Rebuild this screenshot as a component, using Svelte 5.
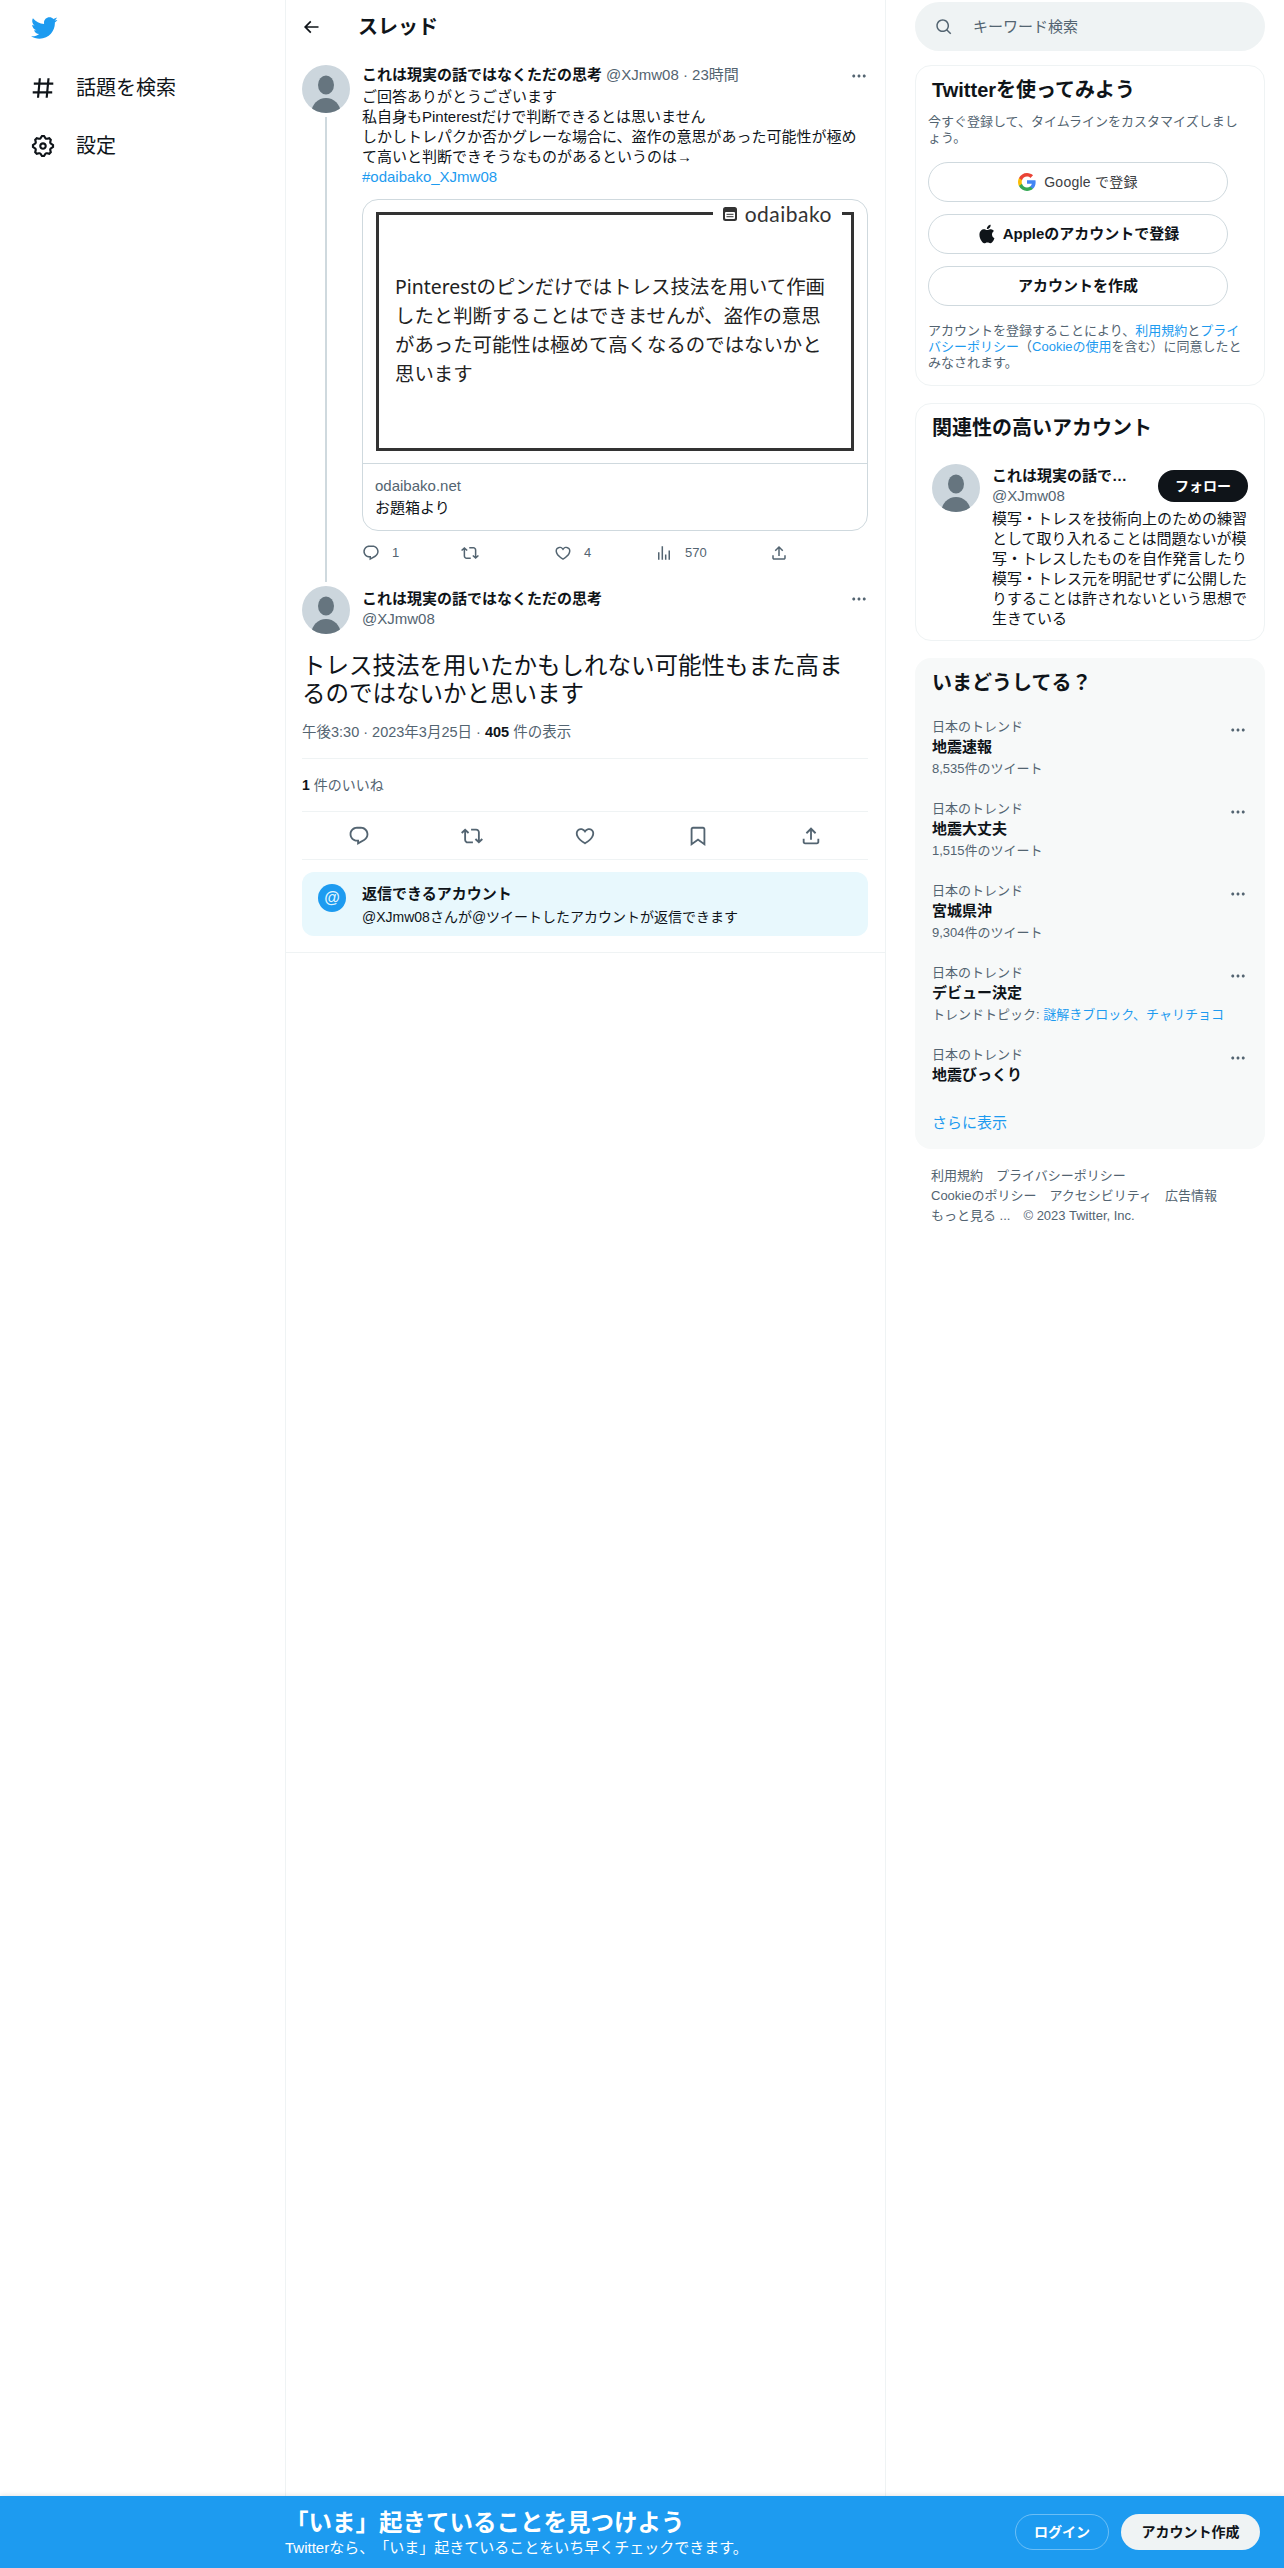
<script>
  const icons = {
    bird: 'M23.643 4.937c-.835.37-1.732.62-2.675.733.962-.576 1.7-1.49 2.048-2.578-.9.534-1.897.922-2.958 1.13-.85-.904-2.06-1.47-3.4-1.47-2.572 0-4.658 2.086-4.658 4.66 0 .364.042.718.12 1.06-3.873-.195-7.304-2.05-9.602-4.868-.4.69-.63 1.49-.63 2.342 0 1.616.823 3.043 2.072 3.878-.764-.025-1.482-.234-2.11-.583v.06c0 2.257 1.605 4.14 3.737 4.568-.392.106-.803.162-1.227.162-.3 0-.593-.028-.877-.082.593 1.85 2.313 3.198 4.352 3.234-1.595 1.25-3.604 1.995-5.786 1.995-.376 0-.747-.022-1.112-.065 2.062 1.323 4.51 2.093 7.14 2.093 8.57 0 13.255-7.098 13.255-13.254 0-.2-.005-.402-.014-.602.91-.658 1.7-1.477 2.323-2.41z',
    hash: 'M10.09 3.098L9.72 7h5.99l.39-4.089 1.99.187L17.72 7h3.78v2h-3.97l-.56 6h3.53v2h-3.72l-.38 4.089-1.99-.187.36-3.902H8.78l-.38 4.089-1.99-.187L6.77 17H2.5v-2h4.46l.56-6H3.5V7h4.21l.39-4.089 1.99.187zM14.96 15l.56-6H9.53l-.56 6h5.99z',
    gear: 'M10.54 1.75h2.92l1.57 2.36c.11.17.32.25.53.21l2.53-.59 2.17 2.17-.58 2.54c-.05.2.04.41.21.53l2.36 1.57v2.92l-2.36 1.57c-.17.12-.26.33-.21.53l.58 2.54-2.17 2.17-2.53-.59c-.21-.04-.42.04-.53.21l-1.57 2.36h-2.92l-1.58-2.36c-.11-.17-.32-.25-.52-.21l-2.54.59-2.17-2.17.58-2.54c.05-.2-.03-.41-.21-.53l-2.35-1.57v-2.92L4.1 8.97c.18-.12.26-.33.21-.53L3.73 5.9 5.9 3.73l2.54.59c.2.04.41-.04.52-.21l1.58-2.36zm1.07 2l-.98 1.47C10.05 6.08 9 6.5 7.99 6.27l-1.46-.34-.6.6.33 1.46c.24 1.01-.18 2.07-1.05 2.64l-1.46.98v.78l1.46.98c.87.57 1.29 1.63 1.05 2.64l-.33 1.46.6.6 1.46-.34c1.01-.23 2.06.19 2.64 1.05l.98 1.47h.78l.97-1.47c.58-.86 1.63-1.28 2.65-1.05l1.45.34.61-.6-.34-1.46c-.23-1.01.18-2.07 1.05-2.64l1.47-.98v-.78l-1.47-.98c-.87-.57-1.28-1.63-1.05-2.64l.34-1.46-.61-.6-1.45.34c-1.02.23-2.07-.19-2.65-1.05l-.97-1.47h-.78zM12 10.5c-.83 0-1.5.67-1.5 1.5s.67 1.5 1.5 1.5c.82 0 1.5-.67 1.5-1.5s-.68-1.5-1.5-1.5zM8.5 12c0-1.93 1.56-3.5 3.5-3.5 1.93 0 3.5 1.57 3.5 3.5s-1.57 3.5-3.5 3.5c-1.94 0-3.5-1.57-3.5-3.5z',
    back: 'M7.414 13l5.043 5.04-1.414 1.42L3.586 12l7.457-7.46 1.414 1.42L7.414 11H21v2H7.414z',
    more: 'M3 12c0-1.1.9-2 2-2s2 .9 2 2-.9 2-2 2-2-.9-2-2zm9 2c1.1 0 2-.9 2-2s-.9-2-2-2-2 .9-2 2 .9 2 2 2zm7 0c1.1 0 2-.9 2-2s-.9-2-2-2-2 .9-2 2 .9 2 2 2z',
    reply: 'M1.751 10c0-4.42 3.584-8 8.005-8h4.366c4.49 0 8.129 3.64 8.129 8.13 0 2.96-1.607 5.68-4.196 7.11l-8.054 4.46v-3.69h-.067c-4.49.1-8.183-3.51-8.183-8.01zm8.005-6c-3.317 0-6.005 2.69-6.005 6 0 3.37 2.77 6.08 6.138 6.01l.351-.01h1.761v2.3l5.087-2.81c1.951-1.08 3.163-3.13 3.163-5.36 0-3.39-2.744-6.13-6.129-6.13H9.756z',
    retweet: 'M4.5 3.88l4.432 4.14-1.364 1.46L5.5 7.55V16c0 1.1.896 2 2 2H13v2H7.5c-2.209 0-4-1.79-4-4V7.55L1.432 9.48.068 8.02 4.5 3.88zM16.5 6H11V4h5.5c2.209 0 4 1.79 4 4v8.45l2.068-1.93 1.364 1.46-4.432 4.14-4.432-4.14 1.364-1.46 2.068 1.93V8c0-1.1-.896-2-2-2z',
    heart: 'M16.697 5.5c-1.222-.06-2.679.51-3.89 2.16l-.805 1.09-.806-1.09C9.984 6.01 8.526 5.44 7.304 5.5c-1.243.07-2.349.78-2.91 1.91-.552 1.12-.633 2.78.479 4.82 1.074 1.97 3.257 4.27 7.129 6.61 3.87-2.34 6.052-4.64 7.126-6.61 1.111-2.04 1.03-3.7.477-4.82-.561-1.13-1.666-1.84-2.908-1.91zm4.187 7.69c-1.351 2.48-4.001 5.12-8.379 7.67l-.503.3-.504-.3c-4.379-2.55-7.029-5.19-8.382-7.67-1.36-2.5-1.41-4.86-.514-6.67.887-1.79 2.647-2.91 4.601-3.01 1.651-.09 3.368.56 4.798 2.01 1.429-1.45 3.146-2.1 4.796-2.01 1.954.1 3.714 1.22 4.601 3.01.896 1.81.846 4.17-.514 6.67z',
    views: 'M8.75 21V3h2v18h-2zM18 21V8.5h2V21h-2zM4 21l.004-10h2L6 21H4zm9.248 0v-7h2v7h-2z',
    share: 'M12 2.59l5.7 5.7-1.41 1.42L13 6.41V16h-2V6.41l-3.3 3.3-1.41-1.42L12 2.59zM21 15l-.02 3.51c0 1.38-1.12 2.49-2.5 2.49H5.5C4.11 21 3 19.88 3 18.5V15h2v3.5c0 .28.22.5.5.5h12.98c.28 0 .5-.22.5-.5L19 15h2z',
    bookmark: 'M4 4.5C4 3.12 5.119 2 6.5 2h11C18.881 2 20 3.12 20 4.5v18.44l-8-5.71-8 5.71V4.5zM6.5 4c-.276 0-.5.22-.5.5v14.56l6-4.29 6 4.29V4.5c0-.28-.224-.5-.5-.5h-11z',
    search: 'M10.25 3.75c-3.59 0-6.5 2.91-6.5 6.5s2.91 6.5 6.5 6.5c1.795 0 3.419-.726 4.596-1.904 1.178-1.177 1.904-2.801 1.904-4.596 0-3.59-2.91-6.5-6.5-6.5zm-8.5 6.5c0-4.694 3.806-8.5 8.5-8.5s8.5 3.806 8.5 8.5c0 1.986-.682 3.815-1.824 5.262l4.781 4.781-1.414 1.414-4.781-4.781c-1.447 1.142-3.276 1.824-5.262 1.824-4.694 0-8.5-3.806-8.5-8.5z',
    apple: 'M16.365 1.43c0 1.14-.493 2.27-1.177 3.08-.744.9-1.99 1.57-2.987 1.57-.12 0-.23-.02-.3-.03-.01-.06-.04-.22-.04-.39 0-1.15.572-2.27 1.206-2.98.804-.94 2.142-1.64 3.248-1.68.03.13.05.28.05.43zm4.565 15.71c-.03.07-.463 1.58-1.518 3.12-.945 1.34-1.94 2.71-3.43 2.71-1.517 0-1.9-.88-3.63-.88-1.698 0-2.302.91-3.67.91-1.377 0-2.332-1.26-3.428-2.8-1.287-1.82-2.323-4.63-2.323-7.28 0-4.28 2.797-6.55 5.552-6.55 1.448 0 2.675.95 3.6.95.865 0 2.222-1.01 3.902-1.01.613 0 2.886.06 4.374 2.19-.13.09-2.383 1.37-2.383 4.19 0 3.26 2.854 4.42 2.955 4.45z'
  }

  const trends = [
    { name: '地震速報', count: '8,535件のツイート' },
    { name: '地震大丈夫', count: '1,515件のツイート' },
    { name: '宮城県沖', count: '9,304件のツイート' },
    { name: 'デビュー決定', topic: '謎解きブロック、チャリチョコ' },
    { name: '地震びっくり' }
  ]

  const smallActions = [
    { icon: 'reply', n: '1' },
    { icon: 'retweet' },
    { icon: 'heart', n: '4' },
    { icon: 'views', n: '570' },
    { icon: 'share' }
  ]
</script>

{#snippet icon(name, size, color = '#536471')}
  <svg class="icon" viewBox="0 0 24 24" width={size} height={size} fill={color} aria-hidden="true"><path d={icons[name]} /></svg>
{/snippet}

{#snippet avatar()}
  <svg class="avatar" viewBox="0 0 48 48" width="48" height="48" aria-hidden="true">
    <rect width="48" height="48" fill="#ccd6dd" />
    <ellipse cx="24" cy="20" rx="8" ry="9.5" fill="#66757f" />
    <circle cx="24" cy="47.5" r="14.5" fill="#66757f" />
  </svg>
{/snippet}

<div class="page">
  <div class="columns">
    <nav class="left">
      <div class="logo">{@render icon('bird', 28, '#1d9bf0')}</div>
      <div class="nav-items">
        <div class="nav-item">{@render icon('hash', 26, '#0f1419')}<span>話題を検索</span></div>
        <div class="nav-item">{@render icon('gear', 26, '#0f1419')}<span>設定</span></div>
      </div>
    </nav>

    <main class="center">
      <header class="head">
        {@render icon('back', 20, '#0f1419')}
        <h1>スレッド</h1>
      </header>

      <article class="tweet">
        <div class="avatar-col">
          {@render avatar()}
          <div class="thread-line"></div>
        </div>
        <div class="tweet-body">
          <div class="name-row">
            <span class="name">これは現実の話ではなくただの思考</span>
            <span class="gray">@XJmw08 · 23時間</span>
            <span class="more">{@render icon('more', 18)}</span>
          </div>
          <p class="text">ご回答ありがとうございます<br />私自身もPinterestだけで判断できるとは思いません<br />しかしトレパクか否かグレーな場合に、盗作の意思があった可能性が極めて高いと判断できそうなものがあるというのは→<br /><span class="link">#odaibako_XJmw08</span></p>

          <div class="card">
            <div class="card-image">
              <div class="frame">
                <div class="brand">
                  <svg viewBox="0 0 14 14" width="14" height="14" aria-hidden="true">
                    <rect width="14" height="14" rx="2.5" fill="#333" />
                    <rect x="2" y="5" width="10" height="7" rx="1" fill="#fff" />
                    <rect x="3.5" y="6.8" width="7" height="1" fill="#333" />
                    <rect x="3.5" y="9.2" width="7" height="1" fill="#333" />
                  </svg>
                  <span>odaibako</span>
                </div>
                <p>Pinterestのピンだけではトレス技法を用いて作画したと判断することはできませんが、盗作の意思があった可能性は極めて高くなるのではないかと思います</p>
              </div>
            </div>
            <div class="card-foot">
              <div class="gray">odaibako.net</div>
              <div class="card-title">お題箱より</div>
            </div>
          </div>

          <div class="mini-actions">
            {#each smallActions as a}
              <div class="mini">
                {@render icon(a.icon, 18)}
                {#if a.n}<span>{a.n}</span>{/if}
              </div>
            {/each}
          </div>
        </div>
      </article>

      <section class="focus">
        <div class="focus-head">
          {@render avatar()}
          <div class="focus-names">
            <div class="name">これは現実の話ではなくただの思考</div>
            <div class="gray">@XJmw08</div>
          </div>
          <span class="more">{@render icon('more', 18)}</span>
        </div>
        <p class="big">トレス技法を用いたかもしれない可能性もまた高まるのではないかと思います</p>
        <div class="meta">午後3:30 · 2023年3月25日 · <b>405</b> 件の表示</div>
        <div class="likes"><b>1</b> 件のいいね</div>
        <div class="actions">
          {#each ['reply', 'retweet', 'heart', 'bookmark', 'share'] as name}
            <div class="action">{@render icon(name, 22)}</div>
          {/each}
        </div>
        <div class="reply-box">
          <div class="at">@</div>
          <div>
            <div class="reply-title">返信できるアカウント</div>
            <div class="reply-sub">@XJmw08さんが@ツイートしたアカウントが返信できます</div>
          </div>
        </div>
      </section>
    </main>

    <aside class="right">
      <div class="search">
        {@render icon('search', 18)}
        <span>キーワード検索</span>
      </div>

      <section class="panel signup">
        <h2>Twitterを使ってみよう</h2>
        <p class="sub">今すぐ登録して、タイムラインをカスタマイズしましょう。</p>
        <div class="btns">
          <button class="google">
            <svg viewBox="0 0 18 18" width="18" height="18" aria-hidden="true">
              <path fill="#4285F4" d="M17.64 9.2c0-.637-.057-1.251-.164-1.84H9v3.481h4.844c-.209 1.125-.843 2.078-1.796 2.717v2.258h2.908c1.702-1.567 2.684-3.874 2.684-6.615z" />
              <path fill="#34A853" d="M9 18c2.43 0 4.467-.806 5.956-2.18l-2.908-2.259c-.806.54-1.837.86-3.048.86-2.344 0-4.328-1.584-5.036-3.711H.957v2.332C2.438 15.983 5.482 18 9 18z" />
              <path fill="#FBBC05" d="M3.964 10.71c-.18-.54-.282-1.117-.282-1.71s.102-1.17.282-1.71V4.958H.957C.347 6.173 0 7.548 0 9s.348 2.827.957 4.042l3.007-2.332z" />
              <path fill="#EA4335" d="M9 3.58c1.321 0 2.508.454 3.44 1.345l2.582-2.58C13.463.891 11.426 0 9 0 5.482 0 2.438 2.017.957 4.958L3.964 7.29C4.672 5.163 6.656 3.58 9 3.58z" />
            </svg>
            Google で登録
          </button>
          <button>{@render icon('apple', 20, '#0f1419')}Appleのアカウントで登録</button>
          <button>アカウントを作成</button>
        </div>
        <p class="sub legal">アカウントを登録することにより、<span class="link">利用規約</span>と<span class="link">プライバシーポリシー</span>（<span class="link">Cookieの使用</span>を含む）に同意したとみなされます。</p>
      </section>

      <section class="panel related">
        <h2>関連性の高いアカウント</h2>
        <div class="acct">
          {@render avatar()}
          <div class="acct-body">
            <div class="acct-top">
              <div class="acct-names">
                <div class="name clip">これは現実の話ではなくただの思考</div>
                <div class="gray">@XJmw08</div>
              </div>
              <button class="follow">フォロー</button>
            </div>
            <p class="bio">模写・トレスを技術向上のための練習として取り入れることは問題ないが模写・トレスしたものを自作発言したり模写・トレス元を明記せずに公開したりすることは許されないという思想で生きている</p>
          </div>
        </div>
      </section>

      <section class="trends">
        <h2>いまどうしてる？</h2>
        <div class="trend-list">
          {#each trends as t}
            <div class="trend">
              <div>
                <div class="trend-label">日本のトレンド</div>
                <div class="trend-name">{t.name}</div>
                {#if t.count}<div class="trend-sub">{t.count}</div>{/if}
                {#if t.topic}<div class="trend-sub">トレンドトピック: <span class="link">{t.topic}</span></div>{/if}
              </div>
              <span class="trend-more">{@render icon('more', 18)}</span>
            </div>
          {/each}
        </div>
        <div class="link show-more">さらに表示</div>
      </section>

      <footer class="foot">
        <span>利用規約</span>
        <span>プライバシーポリシー</span>
        <span>Cookieのポリシー</span>
        <span>アクセシビリティ</span>
        <span>広告情報</span>
        <span>もっと見る ...</span>
        <span>© 2023 Twitter, Inc.</span>
      </footer>
    </aside>
  </div>

  <div class="bar">
    <div class="bar-text">
      <div class="bar-title">「いま」起きていることを見つけよう</div>
      <div class="bar-sub">Twitterなら、「いま」起きていることをいち早くチェックできます。</div>
    </div>
    <div class="bar-btns">
      <button class="login">ログイン</button>
      <button class="create">アカウント作成</button>
    </div>
  </div>
</div>

<style>
  :global(body) {
    margin: 0;
    background: #fff;
  }

  .page {
    height: 2568px;
    display: flex;
    flex-direction: column;
    font-family: 'Liberation Sans', 'Noto Sans CJK JP', sans-serif;
    font-size: 15px;
    line-height: 20px;
    color: #0f1419;
    text-spacing-trim: space-all;
  }

  p, h1, h2 {
    margin: 0;
  }

  button {
    font: inherit;
    cursor: pointer;
  }

  .icon {
    display: block;
    flex-shrink: 0;
  }

  .avatar {
    display: block;
    flex-shrink: 0;
    border-radius: 50%;
  }

  .gray {
    color: #536471;
  }

  .link {
    color: #1d9bf0;
  }

  .name {
    font-weight: 700;
  }

  .columns {
    flex: 1;
    display: flex;
    min-height: 0;
  }

  /* left nav */
  .left {
    width: 285px;
    flex-shrink: 0;
    padding: 14px 0 0 30px;
    box-sizing: border-box;
  }

  .nav-items {
    margin-top: 17px;
  }

  .nav-item {
    height: 58px;
    display: flex;
    align-items: center;
    gap: 20px;
    font-size: 20px;
  }

  /* center */
  .center {
    width: 601px;
    flex-shrink: 0;
    box-sizing: border-box;
    border-left: 1px solid #eff3f4;
    border-right: 1px solid #eff3f4;
  }

  .head {
    height: 53px;
    display: flex;
    align-items: center;
    padding-left: 15px;
    box-sizing: border-box;
  }

  .head h1 {
    font-size: 20px;
    font-weight: 700;
    line-height: 24px;
    margin-left: 37px;
  }

  .tweet {
    display: flex;
    gap: 12px;
    padding: 12px 17px 0 16px;
  }

  .avatar-col {
    display: flex;
    flex-direction: column;
    align-items: center;
  }

  .thread-line {
    flex: 1;
    width: 2px;
    margin-top: 4px;
    background: #cfd9de;
  }

  .tweet-body {
    flex: 1;
    min-width: 0;
  }

  .name-row {
    display: flex;
    gap: 4px;
    white-space: nowrap;
  }

  .more {
    margin-left: auto;
    padding-top: 2px;
  }

  .focus-head .more {
    padding-top: 4px;
  }

  .text {
    margin-top: 2px;
  }

  .card {
    margin-top: 12px;
    border: 1px solid #cfd9de;
    border-radius: 16px;
    overflow: hidden;
  }

  .card-image {
    height: 264px;
    box-sizing: border-box;
    padding: 12px 13px;
    border-bottom: 1px solid #cfd9de;
  }

  .frame {
    position: relative;
    height: 100%;
    box-sizing: border-box;
    border: 3px solid #333;
    display: flex;
    align-items: center;
    padding: 0 16px 3px;
  }

  .frame p {
    font-family: 'Noto Sans', 'Noto Sans CJK JP', sans-serif;
    font-size: 19.4px;
    line-height: 29px;
    color: #222;
  }

  .brand {
    position: absolute;
    top: -13px;
    right: 9px;
    height: 24px;
    display: flex;
    align-items: center;
    gap: 8px;
    padding: 0 10px;
    background: #fff;
    font-family: Lato, sans-serif;
    font-size: 21px;
    letter-spacing: 0.5px;
    color: #333;
  }

  .card-foot {
    padding: 12px;
  }

  .card-title {
    margin-top: 2px;
  }

  .mini-actions {
    display: grid;
    grid-template-columns: 99px 93px 101px 115px 18px;
    margin: 12px 0 19px;
    height: 20px;
  }

  .mini {
    display: flex;
    align-items: center;
    gap: 12px;
    font-size: 13px;
    color: #536471;
  }

  .focus {
    padding: 4px 17px 16px 16px;
    border-bottom: 1px solid #eff3f4;
  }

  .focus-head {
    display: flex;
    gap: 12px;
  }

  .focus-names {
    padding-top: 3px;
  }

  .big {
    margin-top: 18px;
    font-size: 23.5px;
    line-height: 28px;
    padding-right: 5px;
  }

  .meta {
    margin-top: 14px;
    padding-bottom: 16px;
    border-bottom: 1px solid #eff3f4;
    font-size: 14.5px;
    color: #536471;
  }

  .meta b, .likes b {
    color: #0f1419;
  }

  .likes {
    height: 52px;
    display: flex;
    align-items: center;
    gap: 4px;
    font-size: 14px;
    color: #536471;
    border-bottom: 1px solid #eff3f4;
  }

  .actions {
    height: 47px;
    display: flex;
    border-bottom: 1px solid #eff3f4;
  }

  .action {
    flex: 1;
    display: flex;
    align-items: center;
    justify-content: center;
  }

  .reply-box {
    margin-top: 12px;
    height: 64px;
    box-sizing: border-box;
    display: flex;
    gap: 16px;
    padding: 12px 16px;
    border-radius: 12px;
    background: #e8f8fd;
  }

  .at {
    width: 28px;
    height: 28px;
    border-radius: 50%;
    background: #1d9bf0;
    color: #dff3ff;
    font-weight: 700;
    font-size: 16px;
    line-height: 28px;
    text-align: center;
    flex-shrink: 0;
  }

  .reply-title {
    font-weight: 700;
  }

  .reply-sub {
    font-size: 14px;
    margin-top: 3px;
  }

  /* right */
  .right {
    width: 350px;
    margin-left: 29px;
    padding-top: 2px;
  }

  .search {
    height: 49px;
    border-radius: 25px;
    background: #eff3f4;
    display: flex;
    align-items: center;
    gap: 20px;
    padding-left: 20px;
    color: #536471;
  }

  .panel {
    margin-top: 17px;
    border: 1px solid #eff3f4;
    border-radius: 16px;
  }

  h2 {
    font-size: 20px;
    font-weight: 700;
    line-height: 24px;
  }

  .signup {
    margin-top: 14px;
    padding: 12px 12px 14px;
  }

  .signup h2 {
    padding-left: 4px;
  }

  .sub {
    margin-top: 12px;
    width: 318px;
    font-size: 13px;
    line-height: 16px;
    color: #536471;
  }

  .btns {
    margin-top: 16px;
    display: flex;
    flex-direction: column;
    gap: 12px;
  }

  .btns button {
    width: 300px;
    height: 40px;
    border: 1px solid #cfd9de;
    border-radius: 20px;
    background: #fff;
    display: flex;
    align-items: center;
    justify-content: center;
    gap: 6px;
    font-size: 15px;
    font-weight: 700;
    color: #0f1419;
  }

  .btns .google {
    gap: 8px;
    font-size: 14px;
    font-weight: 400;
    letter-spacing: 0.25px;
    color: #3c4043;
  }

  .legal {
    margin-top: 17px;
  }

  .related {
    padding: 12px 16px 11px;
  }

  .acct {
    display: flex;
    gap: 12px;
    margin-top: 24px;
  }

  .acct-body {
    flex: 1;
    min-width: 0;
    padding-top: 2px;
  }

  .acct-top {
    display: flex;
    align-items: center;
    justify-content: space-between;
  }

  .acct-names {
    width: 146px;
  }

  .clip {
    overflow: hidden;
    white-space: nowrap;
    text-overflow: ellipsis;
  }

  .follow {
    width: 90px;
    height: 32px;
    border: none;
    border-radius: 16px;
    background: #0f1419;
    color: #fff;
    font-size: 14px;
    font-weight: 700;
  }

  .bio {
    margin-top: 3px;
  }

  .trends {
    margin-top: 17px;
    padding: 13px 18px 16px 17px;
    border-radius: 16px;
    background: #f7f9f9;
  }

  .trend-list {
    margin-top: 24px;
    display: flex;
    flex-direction: column;
    gap: 24px;
  }

  .trend {
    display: flex;
    justify-content: space-between;
  }

  .trend-label {
    font-size: 13px;
    line-height: 16px;
    color: #536471;
  }

  .trend-name {
    margin-top: 2px;
    font-weight: 700;
  }

  .trend-sub {
    margin-top: 4px;
    font-size: 13px;
    line-height: 16px;
    color: #536471;
  }

  .trend-more {
    margin-top: 2px;
  }

  .show-more {
    margin-top: 28px;
  }

  .foot {
    margin-top: 17px;
    padding-left: 16px;
    width: 300px;
    display: flex;
    flex-wrap: wrap;
    column-gap: 13px;
    font-size: 13px;
    color: #536471;
  }

  /* bottom bar */
  .bar {
    height: 72px;
    flex-shrink: 0;
    box-sizing: border-box;
    padding: 13px 24px 0 285px;
    background: #1d9bf0;
    box-shadow: 0 -1px 5px rgba(0, 0, 0, 0.1);
    display: flex;
    justify-content: space-between;
    color: #fff;
  }

  .bar-title {
    font-size: 23.5px;
    font-weight: 700;
    line-height: 28px;
  }

  .bar-sub {
    margin-top: 1px;
  }

  .bar-btns {
    display: flex;
    gap: 12px;
    height: 36px;
    margin-top: 5px;
  }

  .bar-btns button {
    height: 36px;
    border-radius: 18px;
    font-size: 14px;
    font-weight: 700;
    padding: 0;
  }

  .login {
    width: 94px;
    background: transparent;
    border: 1px solid rgba(255, 255, 255, 0.35);
    color: #fff;
  }

  .create {
    width: 139px;
    background: #eff3f4;
    border: none;
    color: #0f1419;
  }
</style>
